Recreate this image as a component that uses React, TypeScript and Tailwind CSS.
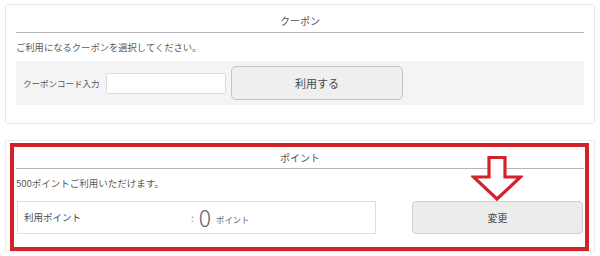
import React from 'react'

const font = { fontFamily: '"Noto Sans CJK JP", "Noto Sans", sans-serif' }

function SectionTitle({ children, className }: { children: React.ReactNode; className: string }) {
  return (
    <div className={`border-b border-[#b5b5b5] text-center text-[10px] leading-[14px] text-[#555] ${className}`}>
      {children}
    </div>
  )
}

function DownArrow() {
  return (
    <svg className="absolute left-[471px] top-[155px]" width="52" height="47" viewBox="0 0 52 47">
      <polygon
        points="18,2.5 34,2.5 34,22 49.5,22 26,44 2.5,22 18,22"
        fill="white"
        stroke="#d2232a"
        strokeWidth="3.2"
        strokeLinejoin="miter"
      />
    </svg>
  )
}

export default function App() {
  return (
    <div className="relative h-[256px] w-[600px] bg-white px-[5px] pt-[4px]" style={font}>
      {/* coupon card */}
      <div className="h-[120px] rounded-[3px] border border-[#e6e6e6] px-[10px]">
        <SectionTitle className="pt-[9px] pb-[4px]">クーポン</SectionTitle>
        <p className="mt-[7px] text-[9.3px] leading-[14px] text-[#5a5a5a]">ご利用になるクーポンを選択してください。</p>
        <div className="mt-[7px] flex h-[44px] items-center bg-[#f4f4f4] pl-[7px]">
          <span className="w-[83px] text-[8.5px] text-[#555]">クーポンコード入力</span>
          <input className="h-[21px] w-[120px] rounded-[2px] border border-[#dcdcdc] bg-white outline-none" />
          <button className="ml-[5px] h-[34px] w-[172px] rounded-[5px] border border-[#c4c4c4] bg-[#efefef] text-[11px] text-[#4a4a4a]">
            利用する
          </button>
        </div>
      </div>

      {/* point card */}
      <div className="mt-[16px] h-[112px] border border-[#ececec] pt-[2px] pr-[5px] pl-[4px]">
        <div className="h-[108px] border-4 border-[#d2232a] pr-[1px] pl-[2px]">
          <SectionTitle className="pt-[4px] pb-[3px]">ポイント</SectionTitle>
          <p className="mt-[7px] text-[9.5px] leading-[14px] text-[#5a5a5a]">500ポイントご利用いただけます。</p>
          <div className="mt-[11px] flex items-center">
            <div className="ml-[1px] flex h-[33px] w-[359px] items-center border border-[#dedede] bg-white pl-[6px]">
              <span className="w-[167px] text-[9.5px] text-[#4a4a4a]">利用ポイント</span>
              <span className="text-[10px] text-[#888]">:</span>
              <span className="ml-[5px] text-[23px] leading-none font-light text-[#666]">0</span>
              <span className="ml-[5px] mt-[4px] text-[8.3px] text-[#666]">ポイント</span>
            </div>
            <button className="ml-[36px] h-[33px] w-[171px] rounded-[4px] border border-[#cfcfcf] bg-[#ececec] text-[10px] text-[#4a4a4a]">
              変更
            </button>
          </div>
        </div>
      </div>

      <DownArrow />
    </div>
  )
}
